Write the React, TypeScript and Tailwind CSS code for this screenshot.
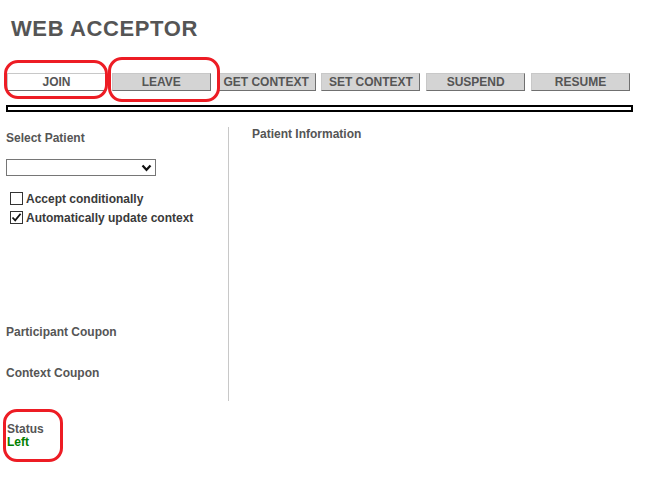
import React from "react";

const BUTTONS = ["JOIN", "LEAVE", "GET CONTEXT", "SET CONTEXT", "SUSPEND", "RESUME"];

function ActionButton({ label, active }: { label: string; active?: boolean }) {
  return (
    <div
      className={`w-[99px] h-[18px] flex items-center justify-center text-[12px] font-bold leading-none text-[#555] border border-t-[#c8c8c8] border-l-[#c8c8c8] border-r-[#707070] border-b-[#707070] ${
        active ? "bg-white" : "bg-[#d4d4d4]"
      }`}
    >
      {label}
    </div>
  );
}

function Check({ checked, label }: { checked?: boolean; label: string }) {
  return (
    <div className="flex items-center h-[19px]">
      <span className="ml-[4px] w-[13px] h-[13px] border border-[#333] bg-white flex items-center justify-center">
        {checked && (
          <svg width="11" height="11" viewBox="0 0 11 11">
            <path d="M1.5 5.5 L4.2 8.4 L9.6 1.8" fill="none" stroke="#111" strokeWidth="1.8" />
          </svg>
        )}
      </span>
      <span className="ml-[3px] text-[12px] font-bold leading-[14px] text-[#3a3a3a]">{label}</span>
    </div>
  );
}

function Mark({ className }: { className: string }) {
  return <div className={`absolute border-[3px] border-[#ed1c24] rounded-[14px] ${className}`} />;
}

export default function App() {
  return (
    <div className="relative w-[649px] h-[488px] bg-white font-['Liberation_Sans',Arial,sans-serif] text-[#555]">
      <h1 className="pt-[18px] pl-[11px] text-[22px] font-bold leading-[22px] tracking-[0.6px] text-[#555]">
        WEB ACCEPTOR
      </h1>

      <div className="mt-[33px] pl-[7px] flex gap-[5.8px]">
        {BUTTONS.map((b, i) => (
          <ActionButton key={b} label={b} active={i === 0} />
        ))}
      </div>

      <div className="mt-[14px] ml-[6px] w-[627px] h-[7px] border-2 border-black bg-white" />

      <div className="mt-[15px] pl-[6px] flex">
        <div className="w-[223px] h-[274px] border-r border-[#c8c8c8] flex flex-col">
          <p className="pt-[4px] text-[12px] font-bold leading-[14px]">Select Patient</p>
          <div className="mt-[14px] w-[150px] h-[17px] border border-[#767676] bg-white flex items-center justify-end pr-[3px]">
            <svg width="11" height="8" viewBox="0 0 11 8">
              <path d="M1.5 1.5 L5.5 5.8 L9.5 1.5" fill="none" stroke="#111" strokeWidth="2.2" />
            </svg>
          </div>
          <div className="mt-[13px] flex flex-col">
            <Check label="Accept conditionally" />
            <Check label="Automatically update context" checked />
          </div>
          <p className="mt-[98px] text-[12px] font-bold leading-[14px]">Participant Coupon</p>
          <p className="mt-[27px] text-[12px] font-bold leading-[14px]">Context Coupon</p>
        </div>
        <div className="pl-[23px]">
          <p className="text-[12px] font-bold leading-[14px]">Patient Information</p>
        </div>
      </div>

      <div className="mt-[22px] pl-[7px] text-[12px] font-bold leading-[13px]">
        <p>Status</p>
        <p className="text-[#008000]">Left</p>
      </div>

      <Mark className="left-[4px] top-[60px] w-[104px] h-[39px]" />
      <Mark className="left-[108px] top-[57px] w-[112px] h-[45px]" />
      <Mark className="left-[3px] top-[409px] w-[60px] h-[53px]" />
    </div>
  );
}
